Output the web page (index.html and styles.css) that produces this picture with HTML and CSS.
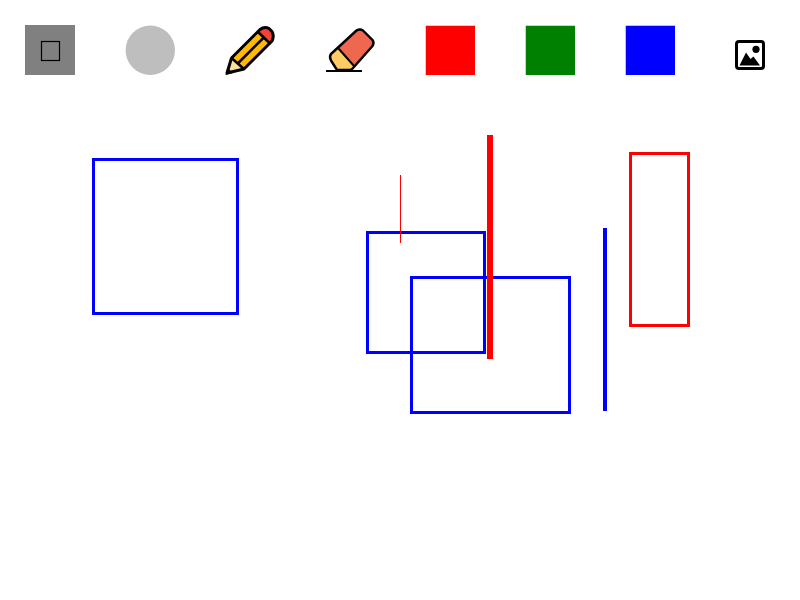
FILE: index.html
```html
<!DOCTYPE html>
<html lang="en">
<head>
	<meta charset="UTF-8">
	<title>Paint</title>
	<link rel="stylesheet" href="styles.css">
</head>
<body>
	<div class="toolbar">
		<div class="tool">
			<svg class="icon" viewBox="0 0 50 50">
				<rect class="tool-bg" width="50" height="50"/>
				<rect class="rect-glyph" x="16.5" y="16.5" width="18" height="19"/>
			</svg>
		</div>
		<div class="tool">
			<svg class="icon" viewBox="0 0 50 50">
				<circle class="circle-glyph" cx="25.3" cy="25.2" r="24.7"/>
			</svg>
		</div>
		<div class="tool">
			<svg class="icon" viewBox="0 0 50 50">
				<path class="pencil-body" d="M6.5 33 L35 4.5 Q39.5 1 44 3.5 L47 6.5 Q49.5 11 47 16 L19 44 L2 48 Z"/>
				<path class="pencil-cap" d="M35 4.5 Q39.5 1 44 3.5 L47 6.5 Q49.5 11 47 16 L45.5 17.5 L33 6.5 Z"/>
				<path class="pencil-cone" d="M6.5 33 L19 44 L2 48 Z"/>
				<path class="pencil-tip" d="M0.5 50 L2.5 42.5 L8 48 Z"/>
				<path class="pencil-line" d="M33 7 L45.5 19 M13 38.25 L38.5 12.75 M6.5 33 L19 44"/>
				<path class="pencil-outline" d="M6.5 33 L35 4.5 Q39.5 1 44 3.5 L47 6.5 Q49.5 11 47 16 L19 44 L2 48 Z"/>
			</svg>
		</div>
		<div class="tool">
			<svg class="icon" viewBox="0 0 50 50">
				<path class="eraser-body" d="M6 29 L31.5 5.5 Q35 3.5 38 5.5 L47.5 15 Q49.5 18 47.5 21 L28.5 42.5 Q27 45 24 45 L12 45 L6 35.5 Q4 32 6 29 Z"/>
				<path class="eraser-end" d="M6 29 L13.5 23 L30 41 L28.5 42.5 Q27 45 24 45 L12 45 L6 35.5 Q4 32 6 29 Z"/>
				<path class="eraser-line" d="M13.5 23.5 L29.5 41.5"/>
				<path class="eraser-outline" d="M6 29 L31.5 5.5 Q35 3.5 38 5.5 L47.5 15 Q49.5 18 47.5 21 L28.5 42.5 Q27 45 24 45 L12 45 L6 35.5 Q4 32 6 29 Z"/>
				<path class="eraser-line" d="M1 46 L37 46"/>
			</svg>
		</div>
		<div class="tool">
			<svg class="icon" viewBox="0 0 50 50"><rect class="swatch-red" x="0.75" y="0.75" width="49.25" height="49.25"/></svg>
		</div>
		<div class="tool">
			<svg class="icon" viewBox="0 0 50 50"><rect class="swatch-green" x="0.75" y="0.75" width="49.25" height="49.25"/></svg>
		</div>
		<div class="tool">
			<svg class="icon" viewBox="0 0 50 50"><rect class="swatch-blue" x="0.75" y="0.75" width="49.25" height="49.25"/></svg>
		</div>
		<div class="tool">
			<svg class="icon" viewBox="0 0 50 50">
				<rect class="image-frame" x="11.5" y="16.5" width="27" height="27" rx="2.5"/>
				<circle cx="31" cy="24.3" r="3.6"/>
				<path d="M14.5 40.5 L21 27.5 L25.5 34 L28.5 31.5 L35 40.5 Z"/>
			</svg>
		</div>
	</div>
	<!-- viewBox starts at y=100 so the shapes keep their page coordinates -->
	<svg class="canvas" viewBox="0 100 800 500">
		<rect class="stroke-blue" x="93.5" y="159.5" width="144" height="154"/>
		<rect class="stroke-blue" x="367.5" y="232.5" width="117" height="120"/>
		<rect class="stroke-blue" x="411.5" y="277.5" width="158" height="135"/>
		<rect class="stroke-red" x="630.5" y="153.5" width="58" height="172"/>
		<line class="line-thin" x1="400.5" y1="175" x2="400.5" y2="243"/>
		<line class="line-thick" x1="490" y1="135" x2="490" y2="359"/>
		<line class="line-blue" x1="605" y1="228" x2="605" y2="411"/>
	</svg>
</body>
</html>
```

FILE: styles.css
```css
html,body{
	margin:0;
	padding:0;
	background:#fff;
}
.toolbar{
	display:flex;
	height:100px;
}
.tool{
	flex:1;
	display:flex;
	align-items:center;
	justify-content:center;
}
.icon{
	display:block;
	width:50px;
	height:50px;
	overflow:visible;
}
.canvas{
	display:block;
	width:800px;
	height:500px;
}

/* tool icons */
.tool-bg{fill:#808080;}
.rect-glyph{fill:none;stroke:#000;stroke-width:1.2;}
.circle-glyph{fill:#bebebe;}
.pencil-body{fill:#ffb900;}
.pencil-cap{fill:#f44336;}
.pencil-cone{fill:#ffe09a;}
.pencil-tip{fill:#000;}
.pencil-line{fill:none;stroke:#000;stroke-width:2.6;}
.pencil-outline{fill:none;stroke:#000;stroke-width:3;stroke-linejoin:round;}
.eraser-body{fill:#f0674f;}
.eraser-end{fill:#ffcc66;}
.eraser-line{fill:none;stroke:#000;stroke-width:2;}
.eraser-outline{fill:none;stroke:#000;stroke-width:2.4;stroke-linejoin:round;}
.swatch-red{fill:#f00;}
.swatch-green{fill:#008000;}
.swatch-blue{fill:#00f;}
.image-frame{fill:none;stroke:#000;stroke-width:3;}

/* drawn shapes */
.stroke-blue{fill:none;stroke:#00f;stroke-width:3;}
.stroke-red{fill:none;stroke:#f00;stroke-width:3;}
.line-thin{stroke:#f00;stroke-width:1;}
.line-thick{stroke:#f00;stroke-width:6;}
.line-blue{stroke:#00f;stroke-width:4;}
```
